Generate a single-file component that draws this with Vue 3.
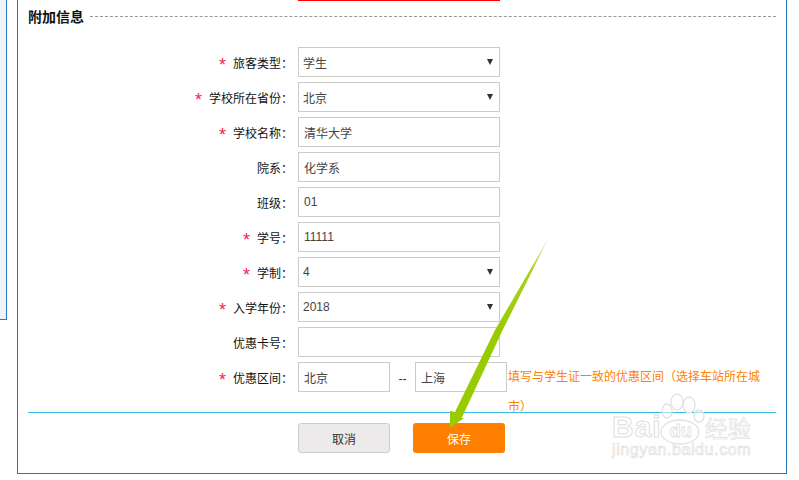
<script setup>
const rows = [
  { label: '旅客类型', req: true, value: '学生', select: true },
  { label: '学校所在省份', req: true, value: '北京', select: true },
  { label: '学校名称', req: true, value: '清华大学' },
  { label: '院系', value: '化学系' },
  { label: '班级', value: '01' },
  { label: '学号', req: true, value: '11111' },
  { label: '学制', req: true, value: '4', select: true },
  { label: '入学年份', req: true, value: '2018', select: true },
  { label: '优惠卡号', value: '' },
]
</script>

<template>
  <div class="page">
    <div class="side"></div>
    <main class="box">
      <div class="redline"></div>
      <header class="title">
        <h2>附加信息</h2>
        <span class="dash"></span>
      </header>
      <form class="form" @submit.prevent>
        <div v-for="r in rows" :key="r.label" class="row">
          <label class="lab"><i v-if="r.req" class="req">*</i>{{ r.label }}：</label>
          <div class="field wide">
            <span :class="{ inset: !r.select }">{{ r.value }}</span>
            <b v-if="r.select" class="caret"></b>
          </div>
        </div>
        <div class="row">
          <label class="lab"><i class="req">*</i>优惠区间：</label>
          <div class="field short"><span class="inset">北京</span></div>
          <span class="sep">--</span>
          <div class="field short"><span class="inset">上海</span></div>
          <p class="hint">填写与学生证一致的优惠区间（选择车站所在城市）</p>
        </div>
      </form>
      <div class="rule"></div>
      <div class="actions">
        <button class="btn cancel" type="button">取消</button>
        <button class="btn save" type="button">保存</button>
      </div>
    </main>

    <svg class="arrow" width="120" height="210" viewBox="0 0 120 210">
      <defs>
        <linearGradient id="ag" gradientUnits="userSpaceOnUse" x1="109" y1="2" x2="60" y2="95">
          <stop offset="0" stop-color="#eef6cf" />
          <stop offset="0.35" stop-color="#a9d21c" />
          <stop offset="1" stop-color="#99cc00" />
        </linearGradient>
      </defs>
      <path d="M109.3 1.7 L62.7 95 L21.7 183 L24 183 L10 193 L10 176 L15 177 L55 95 Z" fill="url(#ag)" />
    </svg>

    <div class="mark">
      <svg class="paw" width="150" height="70" viewBox="0 0 150 70">
        <g fill="rgba(255,255,255,0.5)" stroke="#e2e2e2" stroke-width="1.3">
          <ellipse cx="55" cy="18" rx="5" ry="7" />
          <ellipse cx="65" cy="9" rx="6" ry="8" />
          <ellipse cx="77" cy="12" rx="6" ry="8" />
          <ellipse cx="87" cy="23" rx="5" ry="6" />
          <ellipse cx="68" cy="39" rx="19" ry="12" />
        </g>
      </svg>
      <div class="mark-top"><span class="bai">Bai</span><span class="du">du</span><span class="jy">经验</span></div>
      <div class="mark-url">jingyan.baidu.com</div>
    </div>
  </div>
</template>

<style scoped>
.page {
  position: relative;
  display: flex;
  align-items: flex-start;
  width: 799px;
  height: 480px;
  overflow: hidden;
  background: #fff;
  font-family: "Liberation Sans", "Noto Sans CJK SC", sans-serif;
  font-size: 12px;
  color: #222;
}
.side {
  width: 6px;
  height: 319px;
  flex: none;
  background: #eef2fb;
  border: solid #2a7ab8;
  border-width: 0 1px 1px 0;
}
.box {
  position: relative;
  flex: none;
  box-sizing: border-box;
  width: 770px;
  height: 474px;
  margin-left: 10px;
  padding: 0 10px;
  border: solid #2277bb;
  border-width: 0 1px 1px 1px;
}
.redline {
  position: absolute;
  top: 0;
  left: 280px;
  width: 202px;
  height: 1px;
  background: #f00;
}
.title {
  display: flex;
  align-items: flex-start;
  gap: 6px;
  height: 34px;
}
.title h2 {
  margin: 1px 0 0;
  font-size: 14px;
  line-height: 33px;
  font-weight: 700;
  color: #111;
}
.dash {
  flex: 1;
  margin-top: 16px;
  border-top: 1px dashed #999;
}
.form {
  display: flex;
  flex-direction: column;
  gap: 5px;
  margin-top: 13px;
}
.row {
  display: flex;
  align-items: center;
  height: 30px;
}
.lab {
  box-sizing: border-box;
  width: 270px;
  padding-right: 5px;
  text-align: right;
  color: #111;
}
.req {
  margin-right: 7px;
  font-style: normal;
  font-size: 18px;
  line-height: 12px;
  vertical-align: -3px;
  color: #f3254f;
}
.field {
  position: relative;
  box-sizing: border-box;
  display: flex;
  align-items: center;
  height: 30px;
  padding-left: 4px;
  border: 1px solid #ccccc6;
  color: #444;
  background: #fff;
}
.wide { width: 202px; }
.short { width: 92px; }
.inset { padding-left: 1px; }
.caret {
  position: absolute;
  right: 6px;
  top: 11px;
  width: 0;
  height: 0;
  border-left: 3px solid transparent;
  border-right: 3px solid transparent;
  border-top: 6px solid #333;
}
.sep {
  width: 25px;
  padding-top: 3px;
  text-align: center;
  color: #333;
}
.hint {
  flex: none;
  align-self: flex-start;
  width: 256px;
  margin: 0 0 0 1px;
  line-height: 30px;
  color: #ff8000;
}
.rule {
  height: 1px;
  margin-top: 20px;
  background: #38bbe6;
}
.actions {
  display: flex;
  gap: 23px;
  margin: 10px 0 0 270px;
}
.btn {
  box-sizing: border-box;
  width: 92px;
  height: 30px;
  padding: 0;
  border-radius: 3px;
  font: inherit;
}
.cancel {
  background: #eceaea;
  border: 1px solid #ccc;
  color: #333;
}
.save {
  background: #ff8000;
  border: 0;
  color: #fff;
}
.arrow {
  position: absolute;
  left: 440px;
  top: 235px;
  pointer-events: none;
}
.mark {
  position: absolute;
  left: 612px;
  top: 393px;
  width: 150px;
  height: 70px;
  pointer-events: none;
}
.paw {
  position: absolute;
  left: 0;
  top: 0;
}
.mark-top {
  position: relative;
  display: flex;
  align-items: baseline;
  height: 46px;
  color: rgba(255, 255, 255, 0.7);
  -webkit-text-stroke: 1px #e0e0e0;
}
.bai {
  margin-top: 19px;
  font-size: 30px;
  line-height: 30px;
  font-weight: 700;
  letter-spacing: 1px;
}
.du {
  margin-left: 8px;
  font-size: 18px;
  font-weight: 700;
  -webkit-text-stroke: 0.8px #e0e0e0;
}
.jy {
  margin-left: 13px;
  font-size: 23px;
  -webkit-text-stroke: 0.7px #e0e0e0;
}
.mark-url {
  position: relative;
  margin-top: 2px;
  font-size: 16px;
  line-height: 18px;
  letter-spacing: 0.6px;
  color: rgba(255, 255, 255, 0.7);
  -webkit-text-stroke: 0.7px #e0e0e0;
}
</style>

<style>
html, body { margin: 0; background: #fff; }
</style>
